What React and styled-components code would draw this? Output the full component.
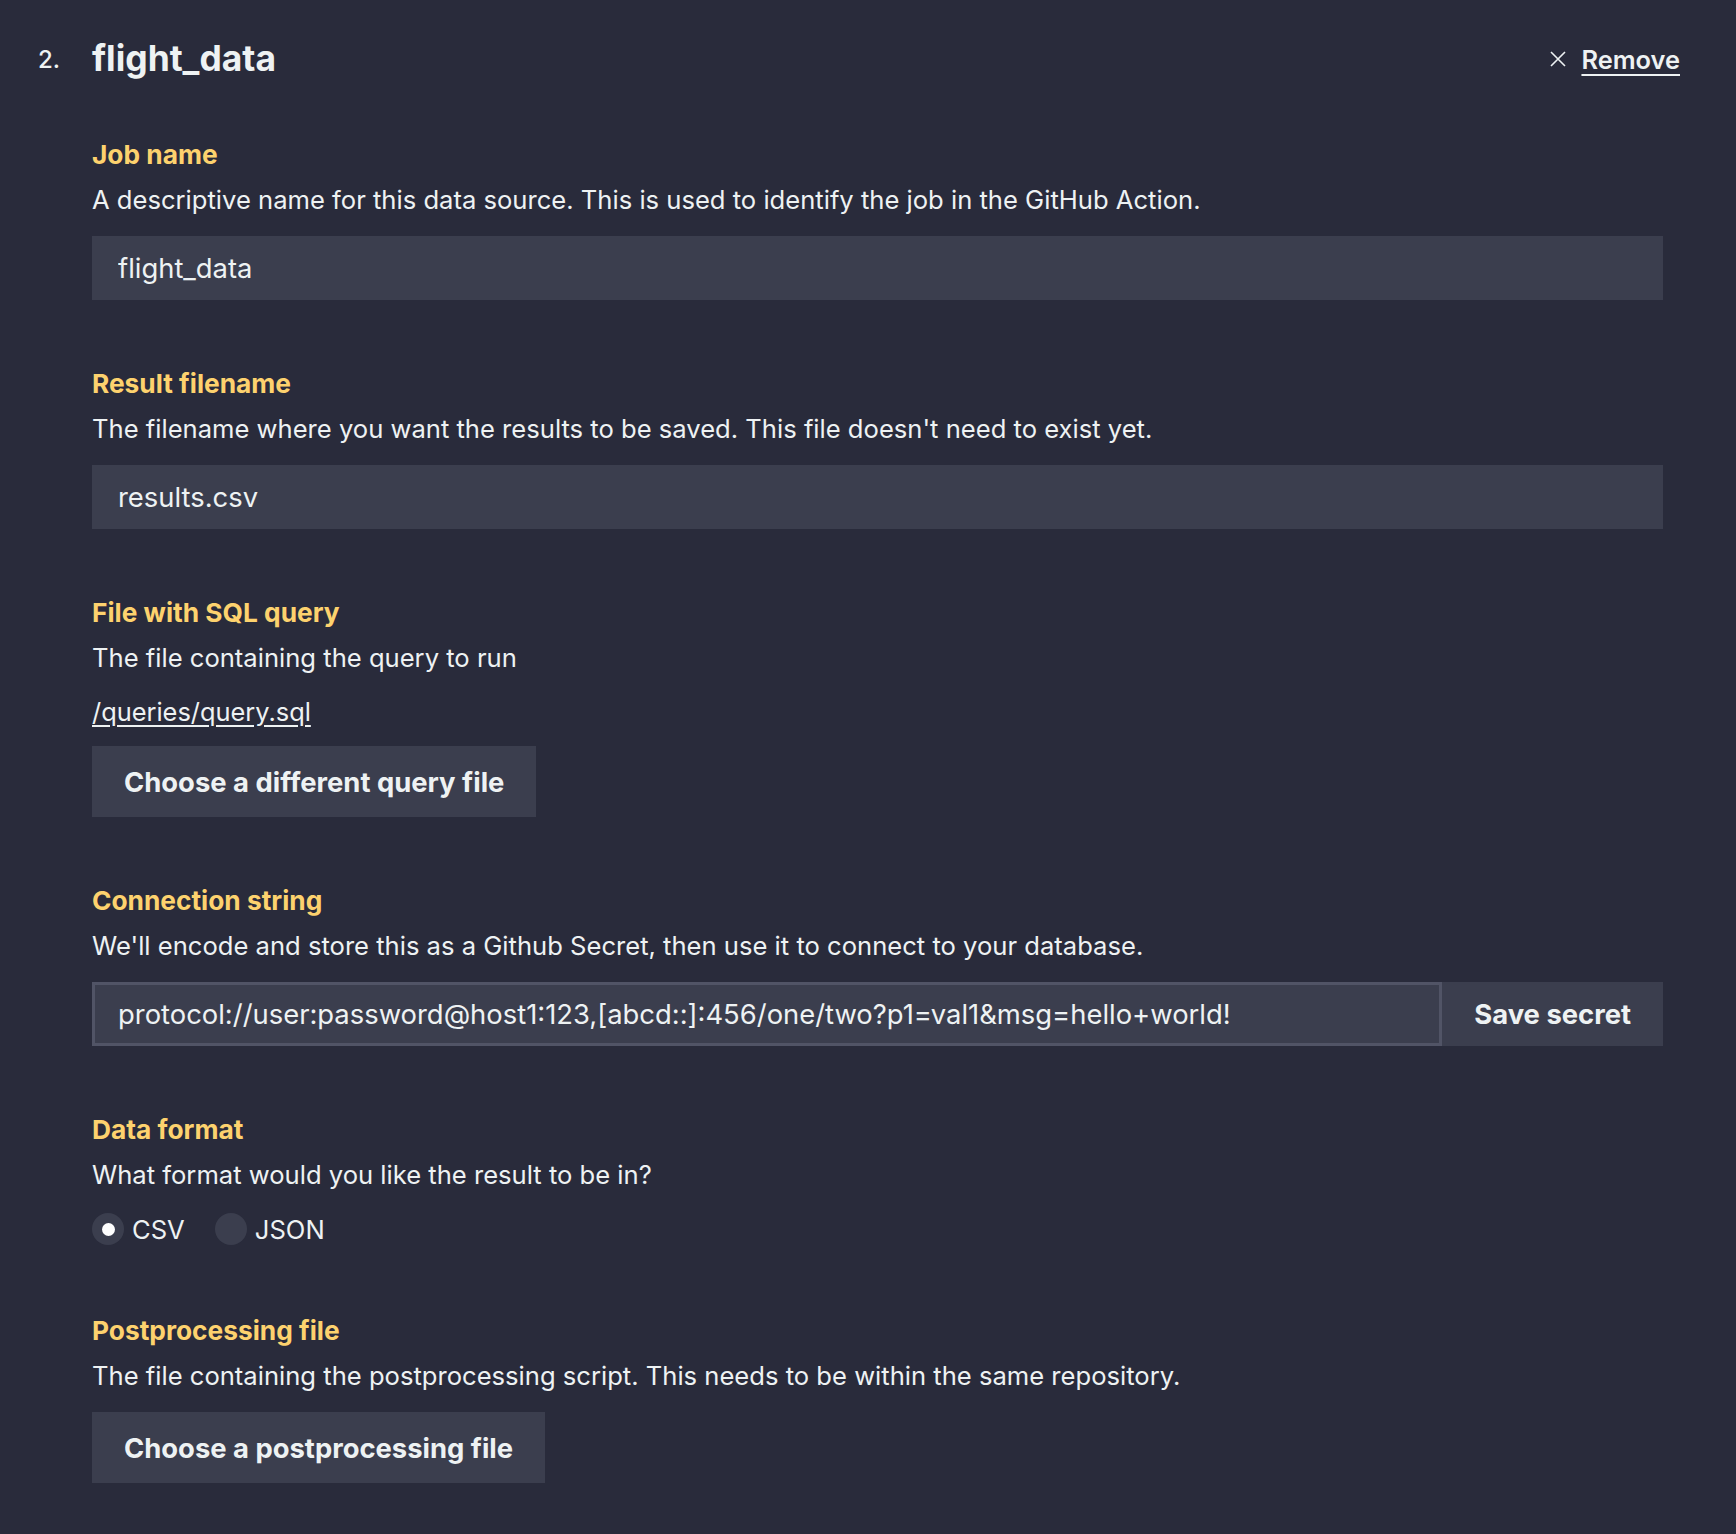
import React from "react"
import styled, { createGlobalStyle } from "styled-components"

const Colors = {
  bg: "#292b3b",
  field: "#3b3e4e",
  border: "#515466",
  text: "#eef2f3",
  yellow: "#fdd26e",
}

const GlobalStyle = createGlobalStyle`
  html, body {
    margin: 0;
    padding: 0;
    background: ${Colors.bg};
  }
  body {
    font-family: Inter, "Noto Sans", sans-serif;
    color: ${Colors.text};
    -webkit-font-smoothing: antialiased;
  }
  * { box-sizing: border-box; }
`

const Page = styled.div`
  min-height: 1534px;
  padding: 37px 56px 0 38px;
`

const Header = styled.div`
  display: flex;
  align-items: center;
  height: 44px;
`

const Number = styled.span`
  width: 54px;
  font-size: 24px;
  font-weight: 500;
`

const Title = styled.h2`
  flex: 1;
  margin: 0;
  font-size: 35.4px;
  font-weight: 700;
  line-height: 44px;
`

const RemoveButton = styled.button`
  display: flex;
  align-items: center;
  gap: 15px;
  padding: 0;
  border: none;
  background: none;
  color: ${Colors.text};
  font-family: inherit;
  font-size: 25.4px;
  font-weight: 600;
  cursor: pointer;

  & span {
    text-decoration: underline;
    text-underline-offset: 5px;
    text-decoration-thickness: 2px;
  }
`

const Fields = styled.div`
  padding: 56px 17px 0 54px;
`

const Field = styled.section`
  margin-bottom: 66px;

  &:last-child {
    margin-bottom: 0;
  }
`

const Label = styled.h3`
  margin: 0 0 9px 0;
  color: ${Colors.yellow};
  font-size: 26.3px;
  font-weight: 700;
  line-height: 36px;
`

const Hint = styled.p`
  margin: 0 0 18px 0;
  font-size: 25.6px;
  line-height: 36px;
`

const FileLink = styled.a`
  display: block;
  margin-bottom: 16px;
  color: ${Colors.text};
  font-size: 25.4px;
  line-height: 36px;
  text-decoration: underline;
  text-underline-offset: 4px;
`

const TextInput = styled.input`
  display: block;
  width: 100%;
  height: 64px;
  padding: 0 26px;
  border: ${p => (p.$outlined ? `3px solid ${Colors.border}` : "none")};
  padding-left: ${p => (p.$outlined ? "23px" : "26px")};
  background: ${Colors.field};
  color: ${Colors.text};
  font-family: inherit;
  font-size: 27.4px;
  outline: none;
`

const Row = styled.div`
  display: flex;
`

const Button = styled.button`
  height: ${p => (p.$inline ? "64px" : "71px")};
  padding: 0 32px;
  border: none;
  background: ${Colors.field};
  color: ${Colors.text};
  font-family: inherit;
  font-size: 27.4px;
  font-weight: 700;
  white-space: nowrap;
  cursor: pointer;
`

const Radios = styled.div`
  display: flex;
  align-items: center;
  gap: 30px;
  height: 36px;
`

const RadioOption = styled.label`
  display: flex;
  align-items: center;
  gap: 8px;
  font-size: 25.6px;
`

const RadioDot = styled.span`
  display: flex;
  align-items: center;
  justify-content: center;
  width: 32px;
  height: 32px;
  border-radius: 50%;
  background: ${Colors.field};

  &::after {
    content: "";
    width: 13px;
    height: 13px;
    border-radius: 50%;
    background: ${p => (p.$checked ? "#ffffff" : "transparent")};
  }
`

const CloseIcon = () => (
  <svg width="16" height="16" viewBox="0 0 16 16">
    <path d="M1 1 L15 15 M15 1 L1 15" stroke={Colors.text} strokeWidth="1.6" fill="none" />
  </svg>
)

const App = () => (
  <Page>
    <GlobalStyle />
    <Header>
      <Number>2.</Number>
      <Title>flight_data</Title>
      <RemoveButton>
        <CloseIcon />
        <span>Remove</span>
      </RemoveButton>
    </Header>
    <Fields>
      <Field>
        <Label>Job name</Label>
        <Hint>A descriptive name for this data source. This is used to identify the job in the GitHub Action.</Hint>
        <TextInput defaultValue="flight_data" />
      </Field>
      <Field>
        <Label>Result filename</Label>
        <Hint>The filename where you want the results to be saved. This file doesn't need to exist yet.</Hint>
        <TextInput defaultValue="results.csv" />
      </Field>
      <Field>
        <Label>File with SQL query</Label>
        <Hint>The file containing the query to run</Hint>
        <FileLink href="#">/queries/query.sql</FileLink>
        <Button>Choose a different query file</Button>
      </Field>
      <Field>
        <Label>Connection string</Label>
        <Hint>We'll encode and store this as a Github Secret, then use it to connect to your database.</Hint>
        <Row>
          <TextInput $outlined defaultValue="protocol://user:password@host1:123,[abcd::]:456/one/two?p1=val1&msg=hello+world!" />
          <Button $inline>Save secret</Button>
        </Row>
      </Field>
      <Field>
        <Label>Data format</Label>
        <Hint>What format would you like the result to be in?</Hint>
        <Radios>
          <RadioOption>
            <RadioDot $checked />
            CSV
          </RadioOption>
          <RadioOption>
            <RadioDot />
            JSON
          </RadioOption>
        </Radios>
      </Field>
      <Field>
        <Label>Postprocessing file</Label>
        <Hint>The file containing the postprocessing script. This needs to be within the same repository.</Hint>
        <Button>Choose a postprocessing file</Button>
      </Field>
    </Fields>
  </Page>
)

export default App
